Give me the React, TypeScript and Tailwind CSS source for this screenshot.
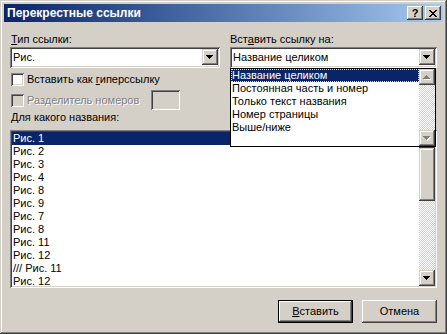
import type { ReactNode } from "react"

const sunken =
  "shadow-[inset_1px_1px_#808080,inset_-1px_-1px_#ffffff,inset_2px_2px_#404040,inset_-2px_-2px_#d4d0c8]"
const raised =
  "shadow-[inset_-1px_-1px_#404040,inset_1px_1px_#d4d0c8,inset_-2px_-2px_#808080,inset_2px_2px_#ffffff]"
const pushed =
  "shadow-[inset_-1px_-1px_#404040,inset_1px_1px_#ffffff,inset_-2px_-2px_#808080,inset_2px_2px_#d4d0c8]"
const checker =
  "bg-[image:repeating-conic-gradient(#d4d0c8_0_25%,#ffffff_0_50%)] bg-[length:2px_2px]"

// pixel arrow, 7x4
function Arrow({ up, disabled }: { up?: boolean; disabled?: boolean }) {
  const rows = [0, 1, 2, 3].map((i) => ({ y: up ? 3 - i : i, x: i, w: 7 - i * 2 }))
  return (
    <svg width="8" height="5" viewBox="0 0 8 5" shapeRendering="crispEdges">
      {disabled &&
        rows.map((r) => <rect key={"s" + r.y} x={r.x + 1} y={r.y + 1} width={r.w} height="1" fill="#ffffff" />)}
      {rows.map((r) => (
        <rect key={r.y} x={r.x} y={r.y} width={r.w} height="1" fill={disabled ? "#808080" : "#000000"} />
      ))}
    </svg>
  )
}

function ScrollBtn({ up, disabled }: { up?: boolean; disabled?: boolean }) {
  return (
    <div className={`h-[16px] w-[16px] shrink-0 bg-[#d4d0c8] flex items-center justify-center ${raised}`}>
      <Arrow up={up} disabled={disabled} />
    </div>
  )
}

function CapButton({ children }: { children: ReactNode }) {
  return (
    <div className={`w-[16px] h-[14px] bg-[#d4d0c8] flex items-center justify-center ${pushed}`}>
      {children}
    </div>
  )
}

function Combo({ text }: { text: string }) {
  return (
    <div className={`h-[21px] bg-white p-[2px] flex ${sunken}`}>
      <div className="flex-1 pl-[1px] flex items-center">{text}</div>
      <ScrollBtn />
    </div>
  )
}

function Box({ disabled }: { disabled?: boolean }) {
  return <div className={`w-[13px] h-[13px] shrink-0 ${disabled ? "bg-[#d4d0c8]" : "bg-white"} ${sunken}`} />
}

const figures = [
  "Рис. 1",
  "Рис. 2",
  "Рис. 3",
  "Рис. 4",
  "Рис. 8",
  "Рис. 9",
  "Рис. 7",
  "Рис. 8",
  "Рис. 11",
  "Рис. 12",
  "/// Рис. 11",
  "Рис. 12",
]

const options = [
  "Название целиком",
  "Постоянная часть и номер",
  "Только текст названия",
  "Номер страницы",
  "Выше/ниже",
]

export default function App() {
  return (
    <div
      className={`w-[447px] h-[334px] bg-[#d4d0c8] p-[4px] font-['Liberation_Sans',Arial,sans-serif] text-[11px] leading-[13px] text-black select-none ${raised}`}
    >
      {/* title bar */}
      <div className="h-[18px] flex items-center justify-between bg-linear-to-r from-[#0a246a] to-[#a6caf0] pl-[3px] pr-[2px]">
        <span className="text-white font-bold text-[12px]">Перекрестные ссылки</span>
        <div className="flex gap-[2px]">
          <CapButton>
            <span className="font-bold text-[11px] leading-[11px]">?</span>
          </CapButton>
          <CapButton>
            <svg width="8" height="7" viewBox="0 0 8 7" shapeRendering="crispEdges">
              {[0, 1, 2, 3, 4, 5, 6].map((i) => (
                <g key={i}>
                  <rect x={i} y={i} width="2" height="1" fill="#000" />
                  <rect x={6 - i} y={i} width="2" height="1" fill="#000" />
                </g>
              ))}
            </svg>
          </CapButton>
        </div>
      </div>

      <div className="px-[6px]">
        <div className="mt-[11px] grid grid-cols-[210px_207px] gap-x-[10px]">
          {/* left column */}
          <div>
            <div className="pl-[1px]">
              <u>Т</u>ип ссылки:
            </div>
            <div className="mt-[1px]">
              <Combo text="Рис." />
            </div>
            <div className="mt-[5px] ml-[1px] h-[13px] flex items-center gap-[3px]">
              <Box />
              <span>
                Вставить как <u>г</u>иперссылку
              </span>
            </div>
            <div className="mt-[4px] h-[20px] flex items-center">
              <div className="w-[141px] pl-[1px] flex items-center gap-[3px]">
                <Box disabled />
                <span className="text-[#808080] [text-shadow:1px_1px_0_#ffffff]">Разделитель номеров</span>
              </div>
              <div className={`w-[29px] h-[20px] bg-[#d4d0c8] ${sunken}`} />
            </div>
          </div>

          {/* right column */}
          <div>
            <div>
              Вст<u>а</u>вить ссылку на:
            </div>
            <div className="relative mt-[1px]">
              <Combo text="Название целиком" />
              <div className="absolute top-[21px] left-0 w-[206px] h-[79px] border border-black bg-white flex z-10">
                <div className="flex-1">
                  {options.map((o, i) => (
                    <div
                      key={o}
                      className={`h-[13px] pl-[1px] whitespace-nowrap ${
                        i === 0
                          ? "bg-[#0a246a] text-white outline-1 outline-dotted outline-[#f5db95] -outline-offset-1"
                          : ""
                      }`}
                    >
                      {o}
                    </div>
                  ))}
                </div>
                <div className="w-[16px] flex flex-col">
                  <ScrollBtn up disabled />
                  <div className={`flex-1 ${checker}`} />
                  <ScrollBtn disabled />
                </div>
              </div>
            </div>
          </div>
        </div>

        <div className="mt-[1px] pl-[1px]">
          <u>Д</u>ля какого названия:
        </div>

        {/* figure list */}
        <div className={`mt-[6px] h-[158px] bg-white p-[2px] flex ${sunken}`}>
          <div className="flex-1 overflow-hidden">
            {figures.map((f, i) => (
              <div
                key={i}
                className={`h-[13px] pl-[1px] whitespace-nowrap ${i === 0 ? "bg-[#0a246a] text-white" : ""}`}
              >
                {f}
              </div>
            ))}
          </div>
          <div className="w-[16px] flex flex-col">
            <ScrollBtn up />
            <div className={`h-[53px] shrink-0 bg-[#d4d0c8] ${raised}`} />
            <div className={`flex-1 ${checker}`} />
            <ScrollBtn />
          </div>
        </div>

        {/* buttons */}
        <div className="mt-[12px] flex justify-end gap-[9px]">
          <div className="w-[75px] h-[23px] border border-black bg-[#d4d0c8]">
            <div className={`w-full h-full flex items-center justify-center ${pushed}`}>
              <span>
                <u>В</u>ставить
              </span>
            </div>
          </div>
          <div className={`w-[75px] h-[23px] bg-[#d4d0c8] flex items-center justify-center ${pushed}`}>Отмена</div>
        </div>
      </div>
    </div>
  )
}
